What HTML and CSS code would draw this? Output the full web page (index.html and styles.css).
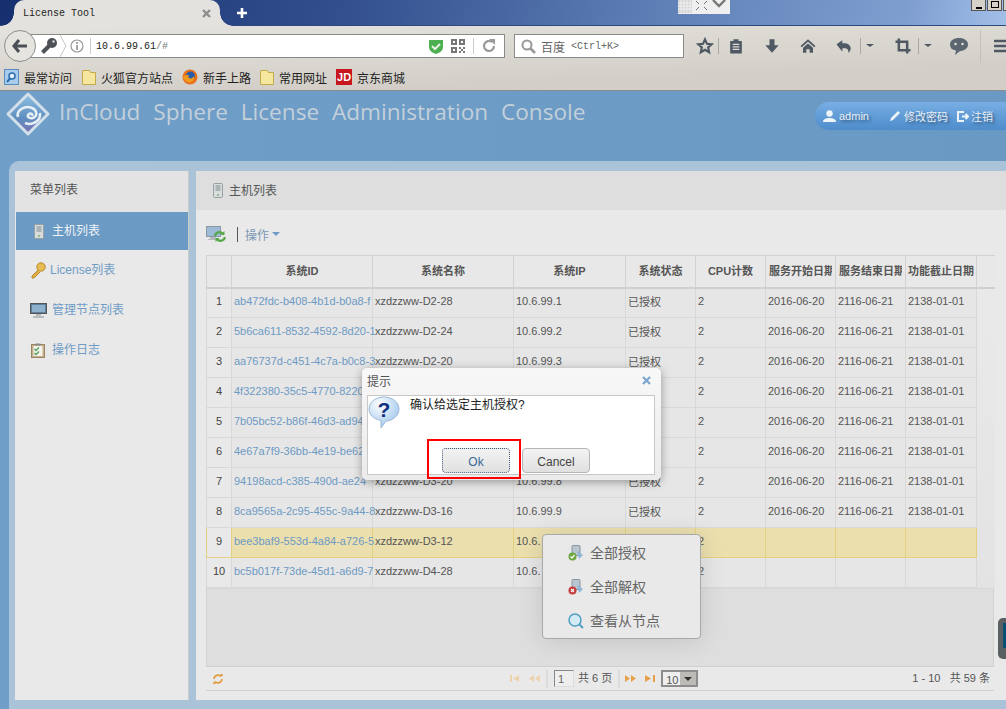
FILE: index.html
```html
<!DOCTYPE html>
<html lang="zh">
<head>
  <meta charset="UTF-8" />
  <title>License Tool</title>
  <link rel="stylesheet" href="styles.css">
</head>
<body>

  <!-- browser -->
  <div class="tabbar">
    <div class="tab">
      <span class="tab-title">License Tool</span>
      <svg class="tab-close" width="9" height="9" viewBox="0 0 9 9"><path d="M1 1l7 7M8 1l-7 7" stroke="#8d8d8d" stroke-width="2.4"/></svg>
    </div>
    <svg class="tab-new" width="12" height="12" viewBox="0 0 12 12"><path d="M6 1v10M1 6h10" stroke="#fff" stroke-width="2.6"/></svg>
    <div class="tray">
      <svg width="52" height="13" viewBox="0 0 52 13">
        <rect width="14" height="13" fill="#d5d5d5"/>
        <path d="M3 0v13M6 0v13M9 0v13M12 0v13M0 3h14M0 6h14M0 9h14" stroke="#efefef"/>
        <path d="M18 1l3 3M29 1l-3 3M18 10l3-3M29 10l-3-3" stroke="#777" fill="none"/>
        <path d="M35 0l6 6 6-6" stroke="#777" stroke-width="2.4" fill="none"/>
      </svg>
    </div>
    <div class="winbtns">
      <span class="winbtn"><i class="win-min"></i></span>
      <span class="winbtn"><i class="win-max"></i></span>
      <span class="winbtn"></span>
    </div>
  </div>

  <div class="toolbox">
    <div class="navrow">
      <div class="backbtn">
        <svg width="16" height="14" viewBox="0 0 16 14"><path d="M7 1L2 7l5 6M2 7h13" fill="none" stroke="#4a4f55" stroke-width="3"/></svg>
      </div>
      <div class="urlbar">
        <svg class="url-key" width="18" height="18" viewBox="0 0 18 18"><circle cx="12" cy="6" r="5" fill="#4d5257"/><path d="M9 9l-6.500 6.500" stroke="#4d5257" stroke-width="4"/><circle cx="13.500" cy="4.500" r="1.200" fill="#dedcd7"/></svg>
        <svg class="url-chev" width="7" height="24" viewBox="0 0 7 24"><path d="M0 1l6 11-6 11" fill="none" stroke="#c4c4c4"/></svg>
        <svg class="url-info" width="14" height="14" viewBox="0 0 14 14"><circle cx="7" cy="7" r="6" fill="none" stroke="#999" stroke-width="1.200"/><path d="M7 6v5M7 3v2" stroke="#888" stroke-width="1.500"/></svg>
        <span class="url-sep"></span>
        <span class="url-text">10.6.99.61<em>/#</em></span>
        <svg class="url-shield" width="14" height="15" viewBox="0 0 14 15"><path d="M0 1h14v7c0 4-4 6-7 7-3-1-7-3-7-7z" fill="#4cb050"/><path d="M3 7l3 3 5-5" fill="none" stroke="#e8f4e0" stroke-width="2"/></svg>
        <svg class="url-qr" width="14" height="14" viewBox="0 0 14 14" fill="#777"><path d="M0 0h6v6H0zM2 2v2h2V2zM8 0h6v6H8zM10 2v2h2V2zM0 8h6v6H0zM2 10v2h2v-2zM8 8h2v2H8zM12 8h2v2h-2zM10 10h2v2h-2zM8 12h2v2H8zM12 12h2v2h-2z" fill-rule="evenodd"/></svg>
        <span class="url-sep url-sep-right"></span>
        <svg class="url-reload" width="14" height="14" viewBox="0 0 14 14"><path d="M12 7a5 5 0 1 1-2-4" fill="none" stroke="#999" stroke-width="2.200"/><path d="M7 0h6v6z" fill="#999"/></svg>
      </div>
      <div class="searchbar">
        <svg width="15" height="15" viewBox="0 0 15 15"><circle cx="6" cy="6" r="4.500" fill="none" stroke="#999" stroke-width="2"/><path d="M9.500 9.500L14 14" stroke="#999" stroke-width="2.600"/></svg>
        <span class="search-name">百度</span>
        <span class="search-hint">&lt;Ctrl+K&gt;</span>
      </div>
      <div class="nav-icons">
        <svg class="ni-star" width="20" height="20" viewBox="-2 -2 24 24"><path d="M10 2l2.400 5.400 5.600.6-4.200 3.800 1.200 5.700-5-3-5 3 1.200-5.700L2 8l5.600-.6z" fill="none" stroke="#4f5963" stroke-width="2.600"/></svg>
        <span class="nav-sep"></span>
        <svg class="ni-clip" width="20" height="20" viewBox="-2 -2 24 24"><path d="M3 4h4V2h6v2h4v15H3z" fill="#4f5963"/><path d="M6 8h8M6 11h8M6 14h8" stroke="#dfddd8" stroke-width="1.300"/></svg>
        <svg class="ni-gap" width="20" height="20" viewBox="-2 -2 24 24"><path d="M7 2h6v7h5l-8 9-8-9h5z" fill="#4f5963"/></svg>
        <svg class="ni-gap" width="20" height="20" viewBox="-2 -2 24 24"><path d="M10 2l9 8-1.500 1.500L10 5l-7.500 6.500L1 10zM4 12l6-5 6 5v6h-4v-4H8v4H4z" fill="#4f5963"/></svg>
        <svg class="ni-gap" width="20" height="20" viewBox="-2 -2 24 24"><path d="M8 3v4c6-1 10 2 10 6 0 2-1 4-3 5 1-3-1-6-7-5v4L1 8z" fill="#4f5963"/></svg>
        <svg class="ni-drop" width="20" height="20" viewBox="0 0 20 20"><path d="M.5 2v16" stroke="#a9a8a4"/><path d="M6 8h8l-4 3z" fill="#4f5963"/></svg>
        <svg class="ni-crop" width="20" height="20" viewBox="-2 -2 24 24"><path d="M5 1v14h14M1 5h14v14" fill="none" stroke="#4f5963" stroke-width="3"/></svg>
        <svg class="ni-drop2" width="20" height="20" viewBox="0 0 20 20"><path d="M.5 2v16" stroke="#a9a8a4"/><path d="M6 8h8l-4 3z" fill="#4f5963"/></svg>
        <svg class="ni-chat" width="20" height="20" viewBox="0 0 20 20"><path d="M10 2c5 0 9 2.500 9 6.500S15 15 11 15l-5 4 1-4.500C3 14 1 12 1 8.500 1 4.500 5 2 10 2z" fill="#5b6670"/><circle cx="6.500" cy="8" r="1.300" fill="#dfddd8"/><circle cx="13.500" cy="8" r="1.300" fill="#dfddd8"/></svg>
        <span class="nav-sep nav-sep-long"></span>
        <svg class="ni-menu" width="14" height="16" viewBox="0 0 14 16"><path d="M0 3h14M0 8h14M0 13h14" stroke="#4f5963" stroke-width="2.600"/></svg>
      </div>
    </div>
    <div class="bookmarks">
      <span class="bm">
        <svg width="15" height="16" viewBox="0 0 15 16"><rect x=".5" y=".5" width="14" height="15" fill="#a8cdec" stroke="#5a8cc0"/><circle cx="8" cy="7" r="3" fill="#e6f2fb" stroke="#2a6cb0" stroke-width="1.500"/><path d="M6 9.500L3 13" stroke="#2a6cb0" stroke-width="2"/></svg>
        最常访问
      </span>
      <span class="bm bm-folder">
        <svg width="14" height="16" viewBox="0 0 14 16"><path d="M.5 1.500h7l1 2h5v12h-13z" fill="#f6e79e" stroke="#c4a94c"/></svg>
        火狐官方站点
      </span>
      <span class="bm bm-fox">
        <svg width="16" height="16" viewBox="0 0 16 16"><circle cx="8" cy="8" r="7.500" fill="#e8701d"/><circle cx="8.500" cy="7" r="4.500" fill="#2a5ca8"/><path d="M1 8c1 4 5 6 8 5 3-1 4-4 3-6-1 2-3 3-5 2-1-1-1-2 0-3-2 0-4 0-6 2z" fill="#f29a1e"/></svg>
        新手上路
      </span>
      <span class="bm bm-folder2">
        <svg width="14" height="16" viewBox="0 0 14 16"><path d="M.5 1.500h7l1 2h5v12h-13z" fill="#f6e79e" stroke="#c4a94c"/></svg>
        常用网址
      </span>
      <span class="bm bm-jd">
        <i class="jd-logo">JD</i>
        京东商城
      </span>
    </div>
  </div>

  <!-- page -->
  <div class="page">
    <header class="site-header">
      <svg class="site-logo" width="46" height="46" viewBox="0 0 46 46">
        <defs>
          <linearGradient id="logoFill" x1="0" y1="0" x2="0" y2="1">
            <stop offset="0" stop-color="#8fc0e4"/>
            <stop offset="0.600" stop-color="#5f8fc0"/>
            <stop offset="1" stop-color="#7a6fb2"/>
          </linearGradient>
        </defs>
        <path d="M23 3l20 20-20 20L3 23z" fill="url(#logoFill)" stroke="#d3dfe9" stroke-width="3" stroke-linejoin="round"/>
        <path d="M13 26c-2-7 7-12 14-9 5 2 6 8 1 10-4 1-7-2-4-4 2-1 4 0 3 2M35 22c1 8-8 13-15 10" fill="none" stroke="#e8f0f6" stroke-width="2.600"/>
      </svg>
      <h1 class="site-title">InCloud Sphere License Administration Console</h1>
      <div class="userbar">
        <span class="user-item user-admin">
          <svg width="13" height="12" viewBox="0 0 13 12"><circle cx="6.500" cy="3.500" r="3.200" fill="#eef3f7"/><path d="M0 12c0-3 3-4 6.500-4s6.500 1 6.500 4z" fill="#eef3f7"/></svg>
          admin
        </span>
        <span class="user-item user-pass">
          <svg width="12" height="12" viewBox="0 0 12 12"><path d="M9 1l2 2-7 7-3 1 1-3z" fill="#eef3f7"/></svg>
          修改密码
        </span>
        <span class="user-item user-out">
          <svg width="12" height="11" viewBox="0 0 12 11"><path d="M7 1H1v9h6M5 5.500h6M8.500 3L11 5.500 8.500 8" fill="none" stroke="#eef3f7" stroke-width="2"/></svg>
          注销
        </span>
      </div>
    </header>

    <div class="frame">
      <aside class="sidebar">
        <div class="side-title">菜单列表</div>
        <a class="side-item active">
          <svg width="10" height="15" viewBox="0 0 10 15"><rect x=".5" y=".5" width="9" height="14" rx="1" fill="#d9dcdc" stroke="#96a0a4"/><path d="M2.500 3h5M2.500 5h5M2.500 7h5" stroke="#7d8a8e"/><circle cx="5" cy="12" r="1" fill="#7fae7a"/></svg>
          主机列表
        </a>
        <a class="side-item item-key">
          <svg width="15" height="17" viewBox="0 0 15 17"><circle cx="10" cy="5" r="4.200" fill="#e8bb55" stroke="#b88a2c"/><path d="M7 8l-6 6v2h2l6-6" fill="#e0ae45" stroke="#b88a2c"/></svg>
          License列表
        </a>
        <a class="side-item item-mon">
          <svg width="17" height="15" viewBox="0 0 17 15"><rect x=".5" y=".5" width="16" height="10" fill="#5f7f9a" stroke="#555"/><rect x="2" y="2" width="13" height="7" fill="#8db0cc"/><path d="M6 11h5v2H6zM3 13h11v2H3z" fill="#b8bcbc"/></svg>
          管理节点列表
        </a>
        <a class="side-item item-log">
          <svg width="14" height="15" viewBox="0 0 14 15"><rect x=".5" y="1.500" width="13" height="13" fill="#c8b08c" stroke="#998463"/><rect x="2.500" y="3" width="9" height="10" fill="#f3f3ec"/><rect x="4.500" y=".5" width="5" height="2" fill="#8a8a8a"/><path d="M3.500 6l1.500 1.500L8 4.500M3.500 10l1.500 1.500L8 8.500" fill="none" stroke="#4fa35a" stroke-width="1.300"/></svg>
          操作日志
        </a>
      </aside>

      <main class="main">
        <div class="main-title">
          <svg width="10" height="15" viewBox="0 0 10 15"><rect x=".5" y=".5" width="9" height="14" rx="1" fill="#d9dcdc" stroke="#96a0a4"/><path d="M2.500 3h5M2.500 5h5M2.500 7h5" stroke="#7d8a8e"/><circle cx="5" cy="12" r="1" fill="#7fae7a"/></svg>
          主机列表
        </div>
        <div class="main-body">
          <div class="toolbar">
            <svg width="20" height="17" viewBox="0 0 20 17"><rect x=".5" y=".5" width="14" height="10" fill="#9dbbd6" stroke="#8a98a4"/><path d="M4 11h6v2H4zM2 13h10v1H2z" fill="#b4b8bc"/><path d="M9 10a4.500 4.500 0 0 1 8-2M19 11a4.500 4.500 0 0 1-8 2" fill="none" stroke="#55a848" stroke-width="2.200"/><path d="M18.500 5v4h-4zM9.500 16v-4h4z" fill="#55a848"/></svg>
            <span class="tool-sep"></span>
            <span class="tool-menu">操作</span>
            <i class="tool-caret"></i>
          </div>

          <div class="grid">
            <table class="grid-table">
              <colgroup>
                <col class="c-num"><col class="c-id"><col class="c-id"><col class="c-ip"><col class="c-mid"><col class="c-mid"><col class="c-mid"><col class="c-mid"><col class="c-last"><col class="c-scroll">
              </colgroup>
              <thead>
                <tr><th></th><th><div>系统ID</div></th><th><div>系统名称</div></th><th><div>系统IP</div></th><th><div>系统状态</div></th><th><div>CPU计数</div></th><th><div>服务开始日期</div></th><th><div>服务结束日期</div></th><th><div>功能截止日期</div></th><th class="th-scroll"></th></tr>
              </thead>
              <tbody>
                <tr><td class="num">1</td><td class="link">ab472fdc-b408-4b1d-b0a8-f</td><td>xzdzzww-D2-28</td><td>10.6.99.1</td><td>已授权</td><td>2</td><td>2016-06-20</td><td>2116-06-21</td><td>2138-01-01</td><td class="scroll-cell" rowspan="10"></td></tr>
                <tr><td class="num">2</td><td class="link">5b6ca611-8532-4592-8d20-1</td><td>xzdzzww-D2-24</td><td>10.6.99.2</td><td>已授权</td><td>2</td><td>2016-06-20</td><td>2116-06-21</td><td>2138-01-01</td></tr>
                <tr><td class="num">3</td><td class="link">aa76737d-c451-4c7a-b0c8-3</td><td>xzdzzww-D2-20</td><td>10.6.99.3</td><td>已授权</td><td>2</td><td>2016-06-20</td><td>2116-06-21</td><td>2138-01-01</td></tr>
                <tr><td class="num">4</td><td class="link">4f322380-35c5-4770-8220</td><td></td><td></td><td></td><td>2</td><td>2016-06-20</td><td>2116-06-21</td><td>2138-01-01</td></tr>
                <tr><td class="num">5</td><td class="link">7b05bc52-b86f-46d3-ad94</td><td></td><td></td><td></td><td>2</td><td>2016-06-20</td><td>2116-06-21</td><td>2138-01-01</td></tr>
                <tr><td class="num">6</td><td class="link">4e67a7f9-36bb-4e19-be62</td><td></td><td></td><td></td><td>2</td><td>2016-06-20</td><td>2116-06-21</td><td>2138-01-01</td></tr>
                <tr><td class="num">7</td><td class="link">94198acd-c385-490d-ae24</td><td>xzdzzww-D3-20</td><td>10.6.99.8</td><td>已授权</td><td>2</td><td>2016-06-20</td><td>2116-06-21</td><td>2138-01-01</td></tr>
                <tr><td class="num">8</td><td class="link">8ca9565a-2c95-455c-9a44-8</td><td>xzdzzww-D3-16</td><td>10.6.99.9</td><td>已授权</td><td>2</td><td>2016-06-20</td><td>2116-06-21</td><td>2138-01-01</td></tr>
                <tr class="picked"><td class="num">9</td><td class="link">bee3baf9-553d-4a84-a726-5</td><td>xzdzzww-D3-12</td><td>10.6.</td><td></td><td>2</td><td></td><td></td><td></td></tr>
                <tr><td class="num">10</td><td class="link">bc5b017f-73de-45d1-a6d9-7</td><td>xzdzzww-D4-28</td><td>10.6.</td><td></td><td>2</td><td></td><td></td><td></td></tr>
              </tbody>
            </table>
            <div class="grid-empty"></div>
            <div class="pager">
              <svg class="pg-refresh" width="12" height="12" viewBox="0 0 12 12"><path d="M2 6a4 4 0 0 1 7-2.500M10 6a4 4 0 0 1-7 2.500" fill="none" stroke="#e39a3c" stroke-width="1.600"/><path d="M8 1l3 0-1 3zM4 11l-3 0 1-3z" fill="#e39a3c"/></svg>
              <div class="pg-nav">
                <svg class="pg-off" width="10" height="7" viewBox="0 0 10 7"><path d="M1 0v7" stroke="#edd3ad" stroke-width="2"/><path d="M9 0v7L3 3.500z" fill="#edd3ad"/></svg>
                <svg class="pg-off" width="11" height="7" viewBox="0 0 11 7"><path d="M5 0v7L0 3.500zM11 0v7L6 3.500z" fill="#edd3ad"/></svg>
                <span class="pg-sep"></span>
                <input class="pg-input" value="1">
                <span class="pg-count">共 6 页</span>
                <span class="pg-sep pg-sep-next"></span>
                <svg class="pg-on" width="11" height="7" viewBox="0 0 11 7"><path d="M0 0v7l5-3.500zM6 0v7l5-3.500z" fill="#e6a04a"/></svg>
                <svg class="pg-on" width="10" height="7" viewBox="0 0 10 7"><path d="M0 0v7l6-3.500z" fill="#e6a04a"/><path d="M9 0v7" stroke="#e6a04a" stroke-width="2"/></svg>
                <span class="pg-size"><b>10</b><i></i></span>
              </div>
              <div class="pg-total">1 - 10&nbsp;&nbsp; 共 59 条</div>
            </div>
          </div>
        </div>
      </main>
    </div>
  </div>

  <!-- overlays -->
  <div class="edge-tab"></div>

  <div class="ctx-menu">
    <div class="ctx-item">
      <svg width="16" height="16" viewBox="0 0 16 16"><rect x="4" y="0.500" width="8" height="10" rx="1" fill="#b9c6d0" stroke="#8595a2"/><path d="M9 6l6 4-4 4z" fill="#8fb6d6"/><circle cx="4.500" cy="11.500" r="4" fill="#6da53e"/><path d="M2.500 11.500l1.500 1.500 2.500-3" fill="none" stroke="#fff" stroke-width="1.200"/></svg>
      全部授权
    </div>
    <div class="ctx-item">
      <svg width="16" height="16" viewBox="0 0 16 16"><rect x="4" y="0.500" width="8" height="10" rx="1" fill="#b9c6d0" stroke="#8595a2"/><path d="M9 6l6 4-4 4z" fill="#8fb6d6"/><circle cx="4.500" cy="11.500" r="4" fill="#c8393c"/><path d="M3 10l3 3M6 10l-3 3" stroke="#fff" stroke-width="1.200"/></svg>
      全部解权
    </div>
    <div class="ctx-item">
      <svg width="16" height="16" viewBox="0 0 16 16"><circle cx="7" cy="7" r="6" fill="#d4ebf3" stroke="#4f9fc4" stroke-width="1.500"/><path d="M11 11l4 4" stroke="#4f9fc4" stroke-width="2"/></svg>
      查看从节点
    </div>
  </div>

  <div class="dialog">
    <div class="dialog-head">
      <span>提示</span>
      <svg width="9" height="9" viewBox="0 0 9 9"><path d="M1 1l7 7M8 1L1 8" stroke="#7ba6cf" stroke-width="2.200"/></svg>
    </div>
    <div class="dialog-body">
      <div class="dialog-msg">
        <svg class="q-icon" width="32" height="33" viewBox="0 0 32 33">
          <defs>
            <radialGradient id="qFill" cx="0.350" cy="0.250" r="0.800">
              <stop offset="0" stop-color="#ffffff"/>
              <stop offset="1" stop-color="#9cc4ec"/>
            </radialGradient>
          </defs>
          <path d="M16 1c8 0 15 5 15 12s-7 12-13 12l-5 7 0-7.500C6 23 1 19 1 13 1 6 8 1 16 1z" fill="url(#qFill)" stroke="#9db9d6"/>
          <text x="16" y="21" text-anchor="middle" class="q-mark">?</text>
        </svg>
        <span class="q-text">确认给选定主机授权?</span>
      </div>
      <div class="dialog-btns">
        <button class="btn btn-ok">Ok</button>
        <button class="btn">Cancel</button>
      </div>
    </div>
    <div class="red-mark"></div>
  </div>

</body>
</html>
```

FILE: styles.css
```css
* {
  box-sizing: border-box;
}

html, body {
  margin: 0;
  height: 709px;
  overflow: hidden;
}

body {
  position: relative;
  width: 1006px;
  background-color: #6b9ac4;
  color: #555;
  font-family: "Liberation Sans", "Noto Sans CJK SC", sans-serif;
  font-size: 11px;
}

/* browser */
.tabbar {
  height: 26px;
  display: flex;
  align-items: flex-end;
  position: relative;
  background: linear-gradient(100deg, #16306f 0%, #34508f 35%, #5d7fb6 65%, #7f9ed0 90%, #a2bfe8 100%);
  border-bottom: 1px solid #2d4a80;
}

.tab {
  width: 206px;
  height: 26px;
  margin-left: 14px;
  padding: 0 6px 0 9px;
  margin-bottom: -1px;
  display: flex;
  align-items: center;
  justify-content: space-between;
  background-color: #e4e2de;
  border-radius: 10px 10px 0 0;
  position: relative;
}

.tab::before,
.tab::after {
  content: "";
  position: absolute;
  bottom: 0;
  width: 13px;
  height: 13px;
}

.tab::before {
  left: -13px;
  background: radial-gradient(circle at 0 0, transparent 12.500px, #e4e2de 13px);
}

.tab::after {
  right: -13px;
  background: radial-gradient(circle at 100% 0, transparent 12.500px, #e4e2de 13px);
}

.tab-title {
  font-family: "Liberation Mono", monospace;
  font-size: 10px;
  color: #222;
}

.tab-close {
  margin-right: 3px;
}

.tab-new {
  margin: 0 0 6px 16px;
}

.tray {
  position: absolute;
  left: 678px;
  top: 0;
  width: 52px;
  height: 14px;
  background-color: #efefef;
}

.tray svg {
  display: block;
}

.winbtns {
  position: absolute;
  top: 0;
  left: 971px;
  display: flex;
}

.winbtn {
  width: 15px;
  height: 11px;
  margin-right: 1px;
  background-color: #d6d2ca;
  border: 1px solid #555;
  border-top: none;
  position: relative;
}

.win-min {
  position: absolute;
  left: 4px;
  bottom: 1px;
  width: 6px;
  height: 2px;
  background-color: #000;
}

.win-max {
  position: absolute;
  left: 3px;
  top: 1px;
  width: 8px;
  height: 7px;
  border: 1px solid #000;
}

.toolbox {
  height: 65px;
  background: linear-gradient(178deg, #e5e3de 0%, #d3cfc8 75%, #d3cfc8 100%);
  border-bottom: 1px solid #8b8b8b;
}

.navrow {
  height: 35px;
  display: flex;
  align-items: center;
  padding-left: 4px;
  position: relative;
}

.backbtn {
  width: 32px;
  height: 32px;
  flex: none;
  margin-top: 5px;
  border-radius: 50%;
  border: 1px solid #8e8e8e;
  background-color: #e6e4df;
  display: flex;
  align-items: center;
  justify-content: center;
  position: relative;
  z-index: 2;
}

.urlbar {
  width: 475px;
  height: 24px;
  flex: none;
  margin-left: -6px;
  margin-top: 5px;
  background-color: #fff;
  border: 1px solid #8a8a8a;
  border-left: none;
  display: flex;
  align-items: center;
}

.url-key {
  margin-left: 10px;
  flex: none;
}

.url-chev {
  margin-left: 2px;
  flex: none;
}

.url-info {
  margin-left: 3px;
  flex: none;
}

.url-sep {
  width: 1px;
  height: 16px;
  margin-left: 6px;
  background-color: #ccc;
  flex: none;
}

.url-text {
  margin-left: 5px;
  font-family: "Liberation Mono", monospace;
  font-size: 10px;
  color: #222;
  flex: 1;
}

.url-text em {
  font-style: normal;
  color: #777;
}

.url-qr {
  margin-left: 8px;
}

.url-sep-right {
  margin-left: 8px;
}

.url-reload {
  margin: 0 8px 0 8px;
}

.searchbar {
  width: 170px;
  height: 24px;
  flex: none;
  margin-left: 9px;
  margin-top: 5px;
  background-color: #fff;
  border: 1px solid #8a8a8a;
  display: flex;
  align-items: center;
  padding-left: 6px;
  color: #666;
}

.search-name {
  margin-left: 5px;
  font-size: 12px;
}

.search-hint {
  margin-left: 6px;
  font-family: "Liberation Mono", monospace;
  font-size: 10px;
}

.nav-icons {
  display: flex;
  flex: none;
  align-items: center;
  margin-top: 5px;
}

.nav-icons svg,
.nav-sep {
  flex: none;
}

.ni-star {
  margin-left: 11px;
}

.nav-sep {
  width: 1px;
  height: 16px;
  margin-left: 3px;
  background-color: #a9a8a4;
}

.ni-clip {
  margin-left: 7px;
}

.ni-gap {
  margin-left: 16px;
}

.ni-drop {
  margin-left: 6px;
}

.ni-crop {
  margin-left: 13px;
}

.ni-drop2 {
  margin-left: 5px;
}

.ni-chat {
  margin-left: 11px;
}

.nav-sep-long {
  height: 32px;
  margin-left: 11px;
  background-color: #c4c1ba;
}

.ni-menu {
  margin-left: 13px;
}

.bookmarks {
  height: 29px;
  display: flex;
  align-items: center;
  padding: 3px 0 0 4px;
  font-size: 12px;
  color: #222;
}

.bm {
  display: flex;
  align-items: center;
  gap: 5px;
}

.bm-folder {
  margin-left: 10px;
}

.bm-fox {
  margin-left: 9px;
}

.bm-folder2 {
  margin-left: 9px;
}

.bm-jd {
  margin-left: 9px;
}

.jd-logo {
  width: 16px;
  height: 16px;
  background-color: #c9151e;
  color: #fff;
  font-style: normal;
  font-weight: bold;
  font-size: 11px;
  line-height: 16px;
  text-align: center;
}

/* page */
.page {
  height: 618px;
  background: linear-gradient(90deg, #6f9ec8, #6a99c3);
}

.site-header {
  height: 70px;
  display: flex;
  align-items: flex-start;
  position: relative;
}

.site-logo {
  margin: 0 0 0 5px;
  flex: none;
}

.site-title {
  margin: 3px 0 0 8px;
  font-family: "Open Sans", sans-serif;
  font-weight: 400;
  font-size: 22.600px;
  line-height: 36px;
  word-spacing: 7px;
  color: #c3d0da;
  white-space: nowrap;
}

.userbar {
  position: absolute;
  left: 815px;
  top: 11px;
  width: 191px;
  height: 28px;
  display: flex;
  align-items: center;
  background: linear-gradient(#78aee4, #4d8ccb);
  border-radius: 14px 0 0 14px;
  color: #e9eff5;
  font-size: 11px;
  text-shadow: 2px 2px 3px #33567c;
}

.user-item {
  display: flex;
  align-items: center;
  gap: 3px;
}

.user-admin {
  margin-left: 8px;
}

.user-pass {
  margin-left: 20px;
}

.user-out {
  margin-left: 9px;
  gap: 2px;
}

.frame {
  height: 548px;
  margin-left: 9px;
  padding: 10px 0 9px 6px;
  background-color: #aac3d9;
  border-radius: 10px 0 0 0;
  display: flex;
}

.sidebar {
  width: 174px;
  flex: none;
  background-color: #e9e9e9;
  border-right: 1px solid #ccc;
}

.side-title {
  height: 41px;
  padding-left: 15px;
  font-size: 12px;
  line-height: 39px;
  color: #555;
  background-color: #e3e3e3;
}

.side-item {
  height: 40px;
  padding: 0 0 3px 16px;
  display: flex;
  align-items: center;
  gap: 4px;
  font-size: 12px;
  color: #6f9cc6;
}

.side-item svg {
  margin-top: 3px;
}

.side-item.active {
  height: 38px;
  margin-left: 1px;
  padding-left: 18px;
  background-color: #6b9ac4;
  color: #eef3f7;
  gap: 8px;
}

.item-mon {
  padding-left: 15px;
  gap: 5px;
}

.item-log {
  gap: 7px;
}

.main {
  flex: 1;
  margin-left: 7px;
  background-color: #e9e9e9;
  display: flex;
  flex-direction: column;
  border-radius: 4px 0 0 0;
}

.main-title {
  height: 39px;
  padding: 0 0 3px 17px;
  display: flex;
  align-items: center;
  gap: 6px;
  font-size: 12px;
  color: #555;
  background-color: #dedede;
}

.main-title svg {
  margin-top: 2px;
}

.main-body {
  flex: 1;
  padding: 0 10px 9px 10px;
  display: flex;
  flex-direction: column;
}

.toolbar {
  height: 45px;
  padding-top: 3px;
  display: flex;
  align-items: center;
  font-size: 12px;
  color: #7a97b3;
}

.tool-sep {
  width: 1px;
  height: 15px;
  margin: 0 7px 0 11px;
  background-color: #555;
}

.tool-caret {
  width: 0;
  height: 0;
  margin-left: 3px;
  border: 4px solid transparent;
  border-top: 4px solid #6f9cc6;
  border-bottom: none;
}

.grid {
  width: 788px;
  flex: 1;
  display: flex;
  flex-direction: column;
}

.grid-table {
  width: 788px;
  table-layout: fixed;
  border-collapse: collapse;
  background-color: #e6e6e6;
}

.c-num { width: 25px; }
.c-id { width: 141px; }
.c-ip { width: 112px; }
.c-mid { width: 70px; }
.c-last { width: 71px; }
.c-scroll { width: 18px; }

.grid-table th {
  height: 32px;
  padding: 0 3px 3px;
  background-color: #e8e8e8;
  border: 1px solid #d2d2d2;
  border-bottom: 2px solid #cfcfcf;
  font-size: 11px;
  font-weight: bold;
  color: #555;
}

.grid-table th div {
  overflow: hidden;
  white-space: nowrap;
}

.grid-table th:nth-child(9) {
  padding: 0 1px 3px;
}

.grid-table .th-scroll {
  border-right: none;
  border-left: none;
}

.grid-table td {
  height: 30px;
  padding: 0 2px 3px;
  border: 1px solid #d8d8d8;
  white-space: nowrap;
  color: #555;
}

.grid-table .num {
  text-align: center;
  background-color: #e9e9e9;
  color: #444;
}

.grid-table .link {
  color: #6d9ac4;
}

.grid-table .scroll-cell {
  border: none;
  padding: 0;
  background: linear-gradient(#e9e9e9, #e3e3e3);
}

.picked td {
  background-color: #ebdfae;
  border-color: #e2d280;
}

.grid-empty {
  flex: 1;
  background-color: #dedede;
  border-top: 1px solid #d8d8d8;
  border-left: 1px solid #d2d2d2;
  border-right: 1px solid #d2d2d2;
}

.pager {
  height: 25px;
  flex: none;
  padding-bottom: 3px;
  display: flex;
  align-items: center;
  border-top: 1px solid #d0d0d0;
  border-bottom: 1px solid #d0d0d0;
  color: #555;
  font-size: 11px;
}

.pager svg,
.pg-input,
.pg-size {
  margin-top: 3px;
}

.pg-refresh {
  margin-left: 6px;
}

.pg-nav {
  display: flex;
  align-items: center;
  margin-left: 286px;
}

.pg-off + .pg-off {
  margin-left: 9px;
}

.pg-sep {
  width: 2px;
  height: 18px;
  margin: 3px 6px 0;
  background-color: #dcdcdc;
}

.pg-sep-next {
  margin-right: 5px;
}

.pg-input {
  width: 20px;
  height: 17px;
  padding: 0 0 0 3px;
  border: 1px solid #888;
  border-right-color: #ddd;
  border-bottom-color: #ddd;
  background-color: #eee;
  font: 11px "Liberation Sans", sans-serif;
  color: #666;
}

.pg-count {
  margin-left: 4px;
  font-size: 11px;
}

.pg-on + .pg-on {
  margin-left: 9px;
}

.pg-size {
  width: 37px;
  height: 17px;
  margin-left: 6px;
  display: flex;
  border: 2px solid #8d8d8d;
  background-color: #eee;
}

.pg-size b {
  flex: 1;
  padding-left: 3px;
  font-weight: normal;
  line-height: 16px;
}

.pg-size i {
  width: 16px;
  background-color: #bdbbb5;
  position: relative;
}

.pg-size i::after {
  content: "";
  position: absolute;
  left: 4px;
  top: 5px;
  border: 4px solid transparent;
  border-top: 4px solid #333;
  border-bottom: none;
}

.pg-total {
  margin-left: auto;
  padding-right: 4px;
}

/* over the page */
.edge-tab {
  position: absolute;
  left: 998px;
  top: 618px;
  width: 10px;
  height: 41px;
  background-color: #5a5f62;
  border-radius: 5px 0 0 5px;
}

.edge-tab::after {
  content: "";
  position: absolute;
  left: 5px;
  top: 5px;
  width: 5px;
  height: 25px;
  background-color: #0d4f72;
}

.ctx-menu {
  position: absolute;
  left: 542px;
  top: 534px;
  width: 159px;
  height: 105px;
  padding-top: 1px;
  background-color: #e9e9e9;
  border: 1px solid #a8a8a8;
  border-radius: 4px;
  box-shadow: 0 2px 24px rgba(0, 0, 0, 0.120);
}

.ctx-item {
  height: 34px;
  padding: 0 0 3px 25px;
  display: flex;
  align-items: center;
  gap: 6px;
  font-size: 14px;
  color: #666;
}

.ctx-item svg {
  margin-top: 3px;
}

.dialog {
  position: absolute;
  left: 362px;
  top: 368px;
  width: 299px;
  height: 112px;
  padding: 0 5px;
  background: linear-gradient(#f8f8f8, #ebebeb);
  border-radius: 5px;
  box-shadow: 0 2px 10px rgba(0, 0, 0, 0.350);
}

.dialog-head {
  height: 27px;
  padding: 0 5px 2px 0;
  display: flex;
  align-items: center;
  justify-content: space-between;
  font-size: 12px;
  color: #555;
}

.dialog-body {
  height: 80px;
  width: 288px;
  background-color: #fff;
  border: 1px solid #c8c8c8;
  display: flex;
  flex-direction: column;
}

.dialog-msg {
  display: flex;
  align-items: flex-start;
  height: 52px;
}

.q-icon {
  flex: none;
}

.q-mark {
  font-family: "Liberation Sans", sans-serif;
  font-size: 21px;
  font-weight: bold;
  fill: #12307e;
}

.q-text {
  margin-left: 10px;
  font-size: 12px;
  line-height: 18px;
  color: #222;
}

.dialog-btns {
  display: flex;
  justify-content: flex-start;
  gap: 12px;
  padding-left: 74px;
}

.btn {
  width: 68px;
  height: 25px;
  padding: 2px 0 0;
  background: linear-gradient(#f3f3f3, #e0e0e0);
  border: 1px solid #b5b5b5;
  border-radius: 4px;
  font: 12px "Liberation Sans", sans-serif;
  color: #444;
}

.btn-ok {
  border: 1px dotted #445a78;
  color: #3c6a94;
}

.red-mark {
  position: absolute;
  left: 65px;
  top: 71px;
  width: 94px;
  height: 40px;
  border: 2px solid #f00;
}
```
